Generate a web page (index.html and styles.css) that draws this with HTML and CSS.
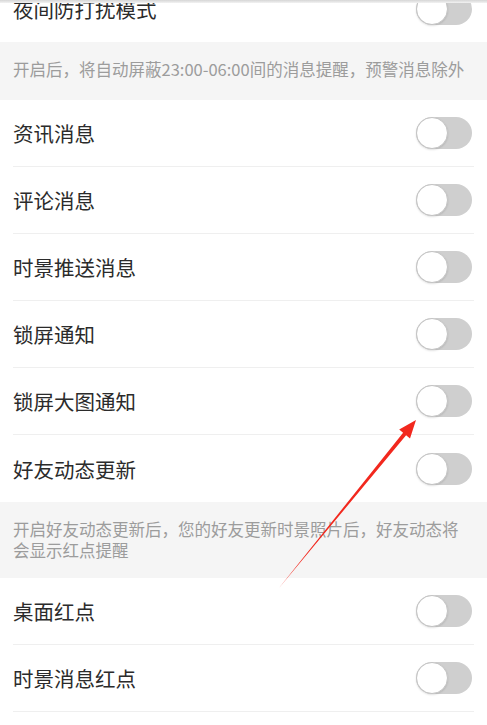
FILE: index.html
```html
<!DOCTYPE html>
<html lang="zh">
<head>
<meta charset="utf-8">
<link rel="stylesheet" href="styles.css">
</head>
<body>
<div class="page">
  <div class="topline"></div>
  <div class="list first">
    <div class="row"><span class="label">夜间防打扰模式</span><span class="switch"><span class="knob"></span></span></div>
  </div>
  <div class="desc">开启后，将自动屏蔽23:00-06:00间的消息提醒，预警消息除外</div>
  <div class="list">
    <div class="row"><span class="label">资讯消息</span><span class="switch"><span class="knob"></span></span></div>
    <div class="row"><span class="label">评论消息</span><span class="switch"><span class="knob"></span></span></div>
    <div class="row"><span class="label">时景推送消息</span><span class="switch"><span class="knob"></span></span></div>
    <div class="row"><span class="label">锁屏通知</span><span class="switch"><span class="knob"></span></span></div>
    <div class="row"><span class="label">锁屏大图通知</span><span class="switch"><span class="knob"></span></span></div>
    <div class="row last"><span class="label">好友动态更新</span><span class="switch"><span class="knob"></span></span></div>
  </div>
  <div class="desc two">开启好友动态更新后，您的好友更新时景照片后，好友动态将会显示红点提醒</div>
  <div class="list">
    <div class="row"><span class="label">桌面红点</span><span class="switch"><span class="knob"></span></span></div>
    <div class="row"><span class="label">时景消息红点</span><span class="switch"><span class="knob"></span></span></div>
  </div>
  <svg class="arrow" width="487" height="725" viewBox="0 0 487 725">
    <polygon points="416,420 399.2,429.6 403.1,432.7 279,588 406.1,435.3 410,438.4" fill="#f2281e"/>
  </svg>
</div>
</body>
</html>
```
FILE: styles.css
```css
html, body {
  margin: 0;
  padding: 0;
  background: #fff;
}
body {
  font-family: "Noto Sans CJK SC", "Noto Sans", sans-serif;
  width: 487px;
  height: 725px;
  overflow: hidden;
}
.page {
  position: relative;
  width: 487px;
  height: 725px;
  overflow: hidden;
}
.topline {
  position: absolute;
  top: 0;
  left: 0;
  right: 0;
  height: 3px;
  background: linear-gradient(#d6d6d6, #f2f2f2);
  z-index: 2;
}
.list {
  background: #fff;
}
.list.first {
  margin-top: -25px;
}
.row {
  height: 67px;
  margin: 0 13px;
  display: flex;
  align-items: center;
  justify-content: space-between;
  border-bottom: 1px solid #efefef;
  box-sizing: border-box;
}
.list.first .row,
.row.last {
  border-bottom: none;
}
.label {
  font-size: 20.5px;
  color: #2b2b2b;
  letter-spacing: 0;
}
.switch {
  position: relative;
  width: 56px;
  height: 32px;
  border-radius: 16px;
  background: #cfcfcf;
  margin-right: 2px;
  flex: none;
}
.knob {
  position: absolute;
  left: 0;
  top: 0;
  width: 32px;
  height: 32px;
  box-sizing: border-box;
  border-radius: 50%;
  background: #fff;
  border: 1.5px solid #c4c4c4;
  box-shadow: 0 1px 2px rgba(0,0,0,0.12);
}
.desc {
  background: #f5f5f5;
  color: #9c9c9c;
  font-size: 16.5px;
  line-height: 21px;
  height: 58px;
  box-sizing: border-box;
  padding: 17px 13px 0 13px;
}
.desc.two {
  height: 76px;
  padding-top: 17px;
}
.arrow {
  position: absolute;
  left: 0;
  top: 0;
  z-index: 3;
}
```
